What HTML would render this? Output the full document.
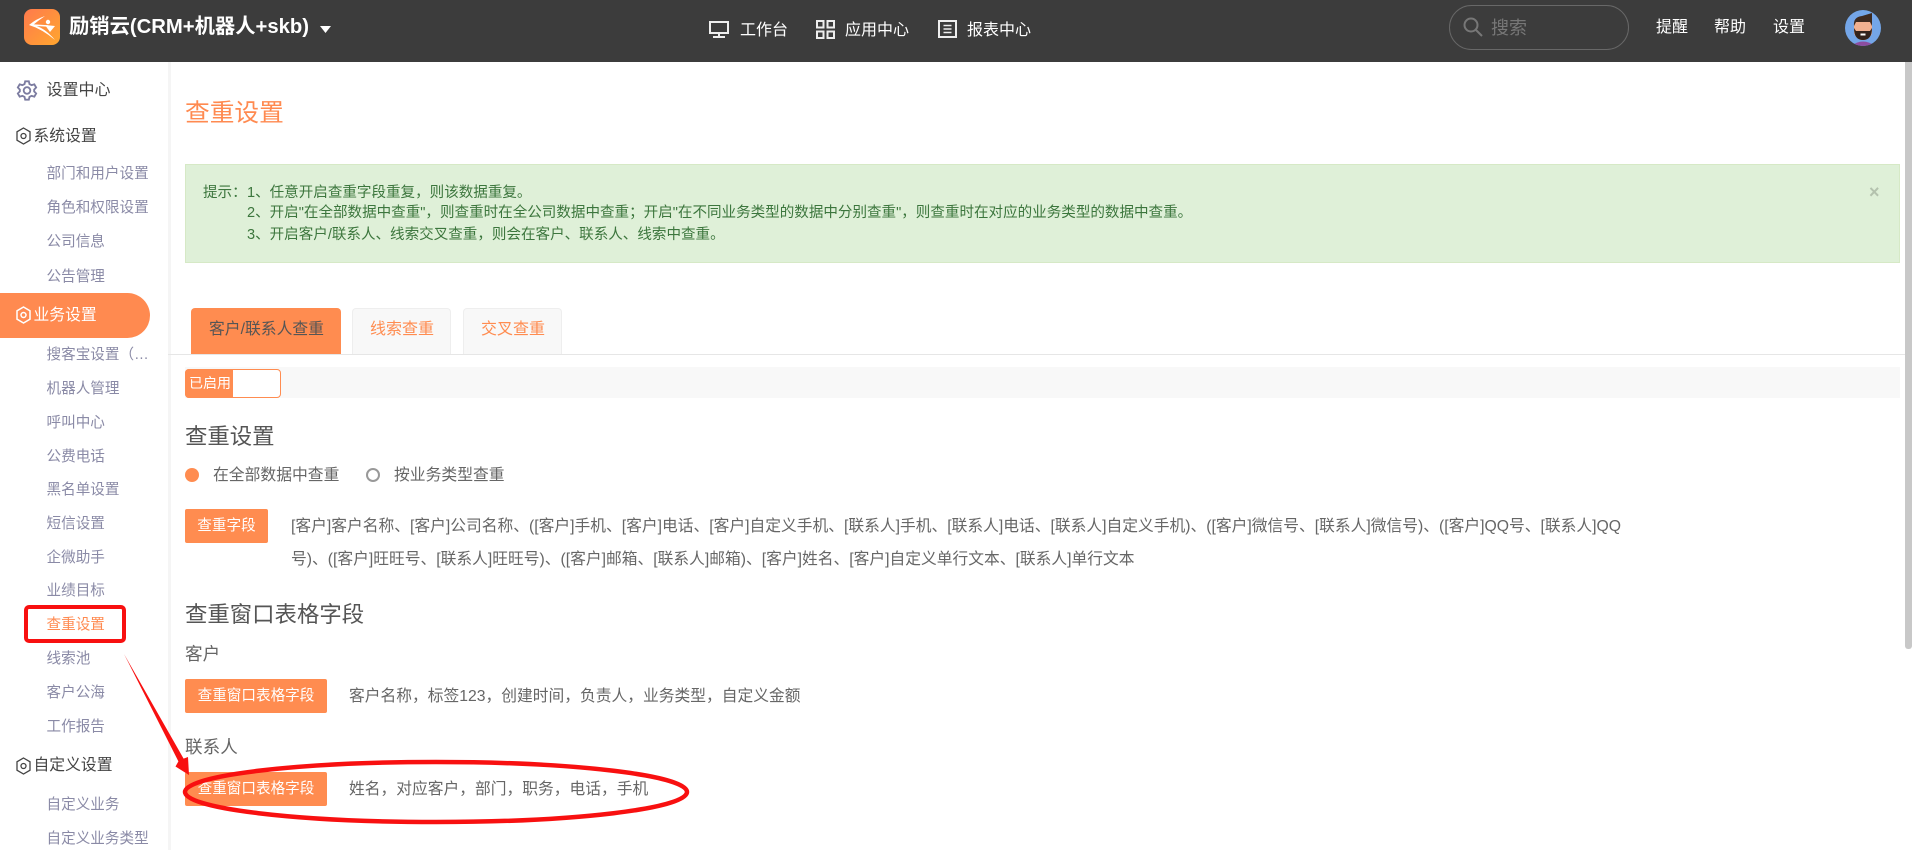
<!DOCTYPE html>
<html lang="zh-CN">
<head>
<meta charset="utf-8">
<title>查重设置</title>
<style>
html,body{margin:0;padding:0;width:1912px;height:850px;overflow:hidden;background:#fff}
body{font-family:"Liberation Sans","Noto Sans CJK SC",sans-serif;position:relative}
.t{position:absolute;white-space:nowrap;height:24px;line-height:24px}
.b{position:absolute;box-sizing:border-box}
.sub{font-size:14.6px;color:#8a8aa6;left:46.5px}
.top{font-size:16px;color:#444}
.nav{font-size:16px;color:#fff}
.green{font-size:14.56px;color:#3c763d}
.gray{font-size:15.75px;color:#666}
.h2{font-size:22.4px;color:#555;left:185px}
.h3{font-size:17.6px;color:#666;left:185px}
.btn{position:absolute;background:#ff8c50;border-radius:2px;color:#fff;font-size:14.6px;text-align:center;height:34px;line-height:34px;left:185px}
svg{position:absolute;overflow:visible}
</style>
</head>
<body>
<!-- header -->
<div class="b" style="left:0;top:0;width:1912px;height:62px;background:#3c3c3c"></div>
<svg style="left:24px;top:9px" width="36" height="36" viewBox="0 0 36 36">
<defs><linearGradient id="g" x1="0" y1="0" x2="1" y2="1"><stop offset="0" stop-color="#ff7a4d"/><stop offset="1" stop-color="#ffa62e"/></linearGradient></defs>
<rect width="36" height="36" rx="8" fill="url(#g)"/>
<path d="M21 7 Q12 10 5 16 Q18 20 31 31 Q20 18 9 16 Q15 11 21 7Z" fill="#fff"/>
<path d="M9 16 L24 17" stroke="#fff" stroke-width="1.400"/>
<circle cx="24" cy="13" r="2.200" fill="#fff"/>
<path d="M21 16 L31 17 L26 23 Z" fill="#fff"/>
</svg>
<div class="t" style="left:69px;top:15px;font-size:20.3px;font-weight:bold;color:#fff">励销云(CRM+机器人+skb)</div>
<svg style="left:320px;top:26px" width="11" height="7"><path d="M0 0H11L5.500 7Z" fill="#fff"/></svg>

<svg style="left:709px;top:21px" width="20" height="17" viewBox="0 0 20 17" fill="none" stroke="#eee" stroke-width="2"><rect x="1" y="1" width="18" height="11"/><path d="M10 12V15M4 16H16"/></svg>
<div class="t nav" style="left:740px;top:19px">工作台</div>
<svg style="left:816px;top:20px" width="19" height="19" viewBox="0 0 19 19" fill="none" stroke="#eee" stroke-width="2"><rect x="1" y="1" width="6.500" height="6.500"/><rect x="11.500" y="1" width="6.500" height="6.500"/><rect x="1" y="11.500" width="6.500" height="6.500"/><rect x="11.500" y="11.500" width="6.500" height="6.500"/></svg>
<div class="t nav" style="left:845px;top:19px">应用中心</div>
<svg style="left:938px;top:20px" width="19" height="18" viewBox="0 0 19 18" fill="none" stroke="#eee" stroke-width="2"><rect x="1" y="1" width="17" height="16"/><path d="M5.500 5.500H13.500M5.500 9H13.500M5.500 12.500H13.500" stroke-width="1.500"/></svg>
<div class="t nav" style="left:967px;top:19px">报表中心</div>

<div class="b" style="left:1449px;top:5px;width:180px;height:45px;border:1px solid #686868;border-radius:23px"></div>
<svg style="left:1463px;top:17px" width="20" height="20" viewBox="0 0 20 20" fill="none" stroke="#777" stroke-width="2"><circle cx="8" cy="8" r="6.500"/><path d="M13 13L19 19"/></svg>
<div class="t" style="left:1491px;top:16px;font-size:18px;color:#777">搜索</div>
<div class="t nav" style="left:1656px;top:16px">提醒</div>
<div class="t nav" style="left:1714px;top:16px">帮助</div>
<div class="t nav" style="left:1773px;top:16px">设置</div>
<svg style="left:1845px;top:10px" width="36" height="36" viewBox="0 0 36 36">
<defs><clipPath id="c"><circle cx="18" cy="18" r="18"/></clipPath></defs>
<g clip-path="url(#c)">
<rect width="36" height="36" fill="#74a6e8"/>
<path d="M6 36 Q18 27 30 36Z" fill="#8d4da0"/>
<rect x="15" y="24" width="6" height="6" fill="#e8a888"/>
<rect x="9" y="9" width="18" height="19" rx="6" fill="#f0b090"/>
<path d="M9 16 Q8 7 17 6 L27 3 Q27 9 27 16 L25 12 H11Z" fill="#3d2a20"/>
<path d="M9 18 Q9 30 18 30 Q27 30 27 18 L25 21 H11Z" fill="#33231c"/>
<rect x="15.500" y="23.500" width="5" height="2" fill="#fff"/>
</g></svg>
<div class="b" style="left:1905px;top:62px;width:7px;height:587px;background:#c8c8c8;border-radius:0 0 3px 3px"></div>

<!-- sidebar -->
<div class="b" style="left:168px;top:62px;width:3px;height:788px;background:#f5f5f5"></div>
<svg style="left:15.500px;top:78.500px" width="22" height="23" viewBox="0 0 24 24" fill="none" stroke="#7c7ca0" stroke-width="2"><path d="M10 2H14L14.700 5L17 6.200L20 5.300L22 8.700L19.800 11V13L22 15.300L20 18.700L17 17.800L14.700 19L14 22H10L9.300 19L7 17.800L4 18.700L2 15.300L4.200 13V11L2 8.700L4 5.300L7 6.200L9.300 5Z"/><circle cx="12" cy="12" r="3.600"/></svg>
<div class="t top" style="left:46.500px;top:79px">设置中心</div>

<svg style="left:16px;top:127px" width="15" height="18" viewBox="0 0 15 18" fill="none" stroke="#444" stroke-width="1.300"><path d="M7.500 1L14 4.800V13.200L7.500 17L1 13.200V4.800Z"/><circle cx="7.500" cy="9" r="2.500"/></svg>
<div class="t top" style="left:33.500px;top:125px;font-size:15.800px">系统设置</div>
<div class="t sub" style="top:162px">部门和用户设置</div>
<div class="t sub" style="top:196px">角色和权限设置</div>
<div class="t sub" style="top:230px">公司信息</div>
<div class="t sub" style="top:265px">公告管理</div>

<div class="b" style="left:0;top:293px;width:150px;height:45px;background:#ff8a50;border-radius:0 23px 23px 0"></div>
<svg style="left:16px;top:306px" width="15" height="18" viewBox="0 0 15 18" fill="none" stroke="#fff" stroke-width="1.500"><path d="M7.500 1L14 4.800V13.200L7.500 17L1 13.200V4.800Z"/><circle cx="7.500" cy="9" r="2.500"/></svg>
<div class="t top" style="left:33.500px;top:304px;color:#fff;font-size:15.800px">业务设置</div>
<div class="t sub" style="top:343px">搜客宝设置（…</div>
<div class="t sub" style="top:377px">机器人管理</div>
<div class="t sub" style="top:411px">呼叫中心</div>
<div class="t sub" style="top:445px">公费电话</div>
<div class="t sub" style="top:478px">黑名单设置</div>
<div class="t sub" style="top:512px">短信设置</div>
<div class="t sub" style="top:546px">企微助手</div>
<div class="t sub" style="top:579px">业绩目标</div>
<div class="t sub" style="top:613px;color:#ff8a50">查重设置</div>
<div class="t sub" style="top:647px">线索池</div>
<div class="t sub" style="top:681px">客户公海</div>
<div class="t sub" style="top:715px">工作报告</div>
<svg style="left:16px;top:757px" width="15" height="18" viewBox="0 0 15 18" fill="none" stroke="#444" stroke-width="1.300"><path d="M7.500 1L14 4.800V13.200L7.500 17L1 13.200V4.800Z"/><circle cx="7.500" cy="9" r="2.500"/></svg>
<div class="t top" style="left:33.500px;top:754px;font-size:15.800px">自定义设置</div>
<div class="t sub" style="top:793px">自定义业务</div>
<div class="t sub" style="top:827px">自定义业务类型</div>

<!-- main -->
<div class="t" style="left:185px;top:102px;font-size:24.700px;color:#ff8a50">查重设置</div>

<div class="b" style="left:185px;top:164px;width:1715px;height:99px;background:#dff0d8;border:1px solid #d6e9c6"></div>
<div class="t green" style="left:203px;top:181px">提示：</div>
<div class="t green" style="left:247px;top:181px">1、任意开启查重字段重复，则该数据重复。</div>
<div class="t green" style="left:247px;top:201px">2、开启"在全部数据中查重"，则查重时在全公司数据中查重；开启"在不同业务类型的数据中分别查重"，则查重时在对应的业务类型的数据中查重。</div>
<div class="t green" style="left:247px;top:223px">3、开启客户/联系人、线索交叉查重，则会在客户、联系人、线索中查重。</div>
<div class="t" style="left:1869px;top:180px;font-size:18px;font-weight:bold;color:#b4c2ae">×</div>

<!-- tabs -->
<div class="b" style="left:168px;top:354px;width:1737px;height:1px;background:#e6e6e6"></div>
<div class="b" style="left:191px;top:308px;width:150px;height:46px;background:#ff8c50;border-radius:4px 4px 0 0"></div>
<div class="t" style="left:209px;top:318px;font-size:15.800px;color:#555">客户/联系人查重</div>
<div class="b" style="left:352px;top:308px;width:99px;height:46px;background:#f8f8f8;border:1px solid #eee;border-bottom:0;border-radius:4px 4px 0 0"></div>
<div class="t" style="left:370px;top:318px;font-size:16px;color:#ff8c50">线索查重</div>
<div class="b" style="left:463px;top:308px;width:99px;height:46px;background:#f8f8f8;border:1px solid #eee;border-bottom:0;border-radius:4px 4px 0 0"></div>
<div class="t" style="left:481px;top:318px;font-size:16px;color:#ff8c50">交叉查重</div>

<!-- toggle -->
<div class="b" style="left:185px;top:367px;width:1715px;height:31px;background:#f8f8f8"></div>
<div class="b" style="left:185px;top:369px;width:96px;height:29px;background:#fff;border:1px solid #ff8c50;border-radius:4px"></div>
<div class="b" style="left:185px;top:369px;width:48px;height:29px;background:#ff8c50;border-radius:4px 0 0 4px"></div>
<div class="t" style="left:189px;top:371px;font-size:14px;color:#fff">已启用</div>

<div class="t h2" style="top:425px">查重设置</div>
<div class="b" style="left:185px;top:468px;width:14px;height:14px;border-radius:50%;background:#ff8c50"></div>
<div class="t" style="left:213px;top:464px;font-size:15.800px;color:#666">在全部数据中查重</div>
<div class="b" style="left:366px;top:468px;width:14px;height:14px;border-radius:50%;background:#fff;border:2px solid #999"></div>
<div class="t" style="left:394px;top:464px;font-size:15.800px;color:#666">按业务类型查重</div>

<div class="btn" style="top:509px;width:83px">查重字段</div>
<div class="t gray" style="left:291px;top:515px">[客户]客户名称、[客户]公司名称、([客户]手机、[客户]电话、[客户]自定义手机、[联系人]手机、[联系人]电话、[联系人]自定义手机)、([客户]微信号、[联系人]微信号)、([客户]QQ号、[联系人]QQ</div>
<div class="t gray" style="left:291px;top:548px">号)、([客户]旺旺号、[联系人]旺旺号)、([客户]邮箱、[联系人]邮箱)、[客户]姓名、[客户]自定义单行文本、[联系人]单行文本</div>

<div class="t h2" style="top:603px">查重窗口表格字段</div>
<div class="t h3" style="top:642px">客户</div>
<div class="btn" style="top:679px;width:142px">查重窗口表格字段</div>
<div class="t gray" style="left:349px;top:685px">客户名称，标签123，创建时间，负责人，业务类型，自定义金额</div>
<div class="t h3" style="top:735px">联系人</div>
<div class="btn" style="top:772px;width:142px">查重窗口表格字段</div>
<div class="t gray" style="left:349px;top:778px">姓名，对应客户，部门，职务，电话，手机</div>

<!-- annotations -->
<div class="b" style="left:24px;top:605px;width:102px;height:38px;border:4px solid #f81010;border-radius:5px"></div>
<svg style="left:0;top:0" width="1912" height="850">
<path d="M124 654 L183.600 758.600 L188 757 L189 775 L175.500 766.500 L178.400 761.400 Z" fill="#f81010"/>
<ellipse cx="436" cy="792" rx="251" ry="30" fill="none" stroke="#f81010" stroke-width="4.500"/>
</svg>
</body>
</html>
